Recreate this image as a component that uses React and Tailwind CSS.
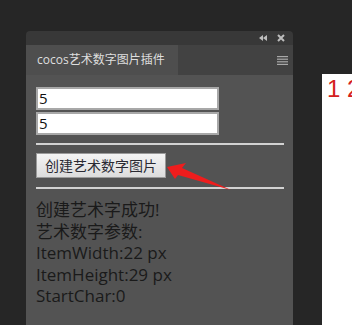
import React from "react";

export default function App() {
  const cjk = { fontFamily: '"Microsoft YaHei", "Open Sans", "Noto Sans CJK SC", sans-serif' };
  return (
    <div className="relative w-[352px] h-[325px] bg-[#262626] overflow-hidden flex" style={cjk}>
      {/* panel */}
      <div className="ml-[26px] mt-[31px] w-[267px] flex flex-col shrink-0">
        <div className="h-[14px] bg-[#383838] rounded-t-[4px] flex items-center justify-end pr-[8px] gap-[10px]">
          <svg width="8" height="6" viewBox="0 0 8 6">
            <path d="M4 0 L0 3 L4 6 Z M8 0 L4 3 L8 6 Z" fill="#bdbdbd" />
          </svg>
          <svg width="8" height="8" viewBox="0 0 8 8">
            <path d="M1 1 L7 7 M7 1 L1 7" stroke="#bdbdbd" strokeWidth="2" />
          </svg>
        </div>
        <div className="h-[30px] bg-[#424242] flex items-stretch">
          <div className="w-[152px] bg-[#4e4e4e] flex items-center pl-[11px] text-[12px] text-[#dedede]">
            cocos艺术数字图片插件
          </div>
          <div className="flex-1 flex items-center justify-end pr-[5px]">
            <svg width="11" height="9" viewBox="0 0 11 9">
              <rect x="0" y="0" width="11" height="1.2" fill="#a8a8a8" />
              <rect x="0" y="2.6" width="11" height="1.2" fill="#a8a8a8" />
              <rect x="0" y="5.2" width="11" height="1.2" fill="#a8a8a8" />
              <rect x="0" y="7.8" width="11" height="1.2" fill="#a8a8a8" />
            </svg>
          </div>
        </div>
        <div className="flex-1 bg-[#535353] pl-[10px] pr-[9px] pt-[12px] flex flex-col">
          <div className="w-[183px] h-[23px] border-2 border-[#a8a8a8] bg-white flex items-center pl-[1px] text-[15px] text-[#111]">
            5
          </div>
          <div className="mt-[2px] w-[183px] h-[23px] border-2 border-[#a8a8a8] bg-white flex items-center pl-[1px] text-[15px] text-[#111]">
            5
          </div>
          <div className="mt-[8px] h-[2px] bg-[#d2d2d2]" />
          <div className="mt-[8px] w-[130px] h-[25px] border border-[#9a9a9a] bg-gradient-to-b from-[#f4f4f4] to-[#dcdcdc] flex items-center justify-center text-[14px] text-[#2a2a33]">
            创建艺术数字图片
          </div>
          <div className="mt-[9px] h-[2px] bg-[#d2d2d2]" />
          <div className="mt-[10px] text-[17px] leading-[21.5px] text-[#1a1a1a]">
            <div>创建艺术字成功!</div>
            <div>艺术数字参数:</div>
            <div>ItemWidth:22 px</div>
            <div>ItemHeight:29 px</div>
            <div>StartChar:0</div>
          </div>
        </div>
      </div>
      {/* right area */}
      <div className="ml-[29px] mt-[74px] flex-1 bg-white pl-[5px] pt-[1px] text-[24px] leading-[28px] text-[#d42020] whitespace-nowrap" style={{ fontFamily: '"Liberation Sans", sans-serif' }}>
        1 2
      </div>
      {/* arrow */}
      <svg className="absolute left-0 top-0" width="352" height="325" viewBox="0 0 352 325">
        <path d="M167 167 L186 163 L182 168 L231 190 L178 175 L175 179 Z" fill="#ee1d1d" />
      </svg>
    </div>
  );
}
